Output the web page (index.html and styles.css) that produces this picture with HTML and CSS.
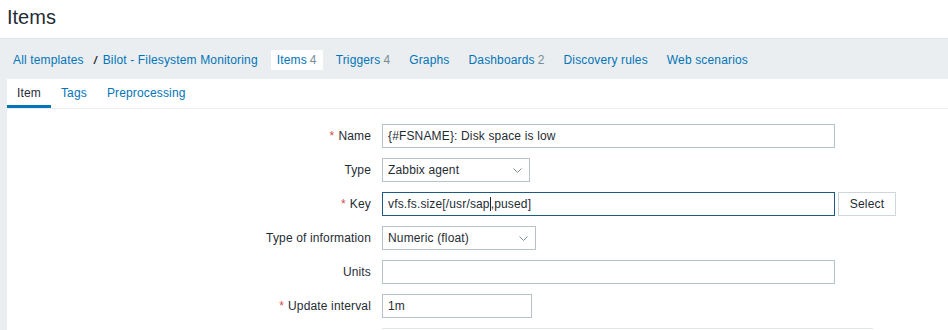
FILE: index.html
```html
<!DOCTYPE html>
<html lang="en">
<head>
<meta charset="utf-8">
<title>Items</title>
<link rel="stylesheet" href="styles.css">
</head>
<body>
<header class="page-header">
  <h1 class="page-title">Items</h1>
</header>
<nav class="subnav">
  <ul class="subnav-list">
    <li class="crumb crumb-first"><a href="#">All templates</a></li>
    <li class="crumb-sep">/</li>
    <li class="crumb"><a href="#">Bilot - Filesystem Monitoring</a></li>
    <li class="crumb crumb-selected"><a href="#">Items</a><span class="count">4</span></li>
    <li class="crumb"><a href="#">Triggers</a><span class="count">4</span></li>
    <li class="crumb"><a href="#">Graphs</a></li>
    <li class="crumb"><a href="#">Dashboards</a><span class="count">2</span></li>
    <li class="crumb"><a href="#">Discovery rules</a></li>
    <li class="crumb"><a href="#">Web scenarios</a></li>
  </ul>
</nav>
<main class="content">
  <ul class="tabs">
    <li class="tab tab-active">Item</li>
    <li class="tab"><a href="#">Tags</a></li>
    <li class="tab"><a href="#">Preprocessing</a></li>
  </ul>
  <form class="form-grid">
    <label class="form-label required">Name</label>
    <div class="field"><div class="input w-wide">{#FSNAME}: Disk space is low</div></div>

    <label class="form-label">Type</label>
    <div class="field">
      <div class="select w-type">Zabbix agent
        <svg class="chev" width="9" height="5" viewBox="0 0 9 5"><path d="M0.5 0.5 L4.5 4.5 L8.5 0.5" fill="none" stroke="#768d99" stroke-width="1"/></svg>
      </div>
    </div>

    <label class="form-label required">Key</label>
    <div class="field field-row">
      <div class="input input-focus w-wide">vfs.fs.size[/usr/sap<span class="caret"></span>,pused]</div>
      <button type="button" class="btn-grey">Select</button>
    </div>

    <label class="form-label">Type of information</label>
    <div class="field">
      <div class="select w-info">Numeric (float)
        <svg class="chev" width="9" height="5" viewBox="0 0 9 5"><path d="M0.5 0.5 L4.5 4.5 L8.5 0.5" fill="none" stroke="#768d99" stroke-width="1"/></svg>
      </div>
    </div>

    <label class="form-label">Units</label>
    <div class="field"><div class="input w-wide"></div></div>

    <label class="form-label required">Update interval</label>
    <div class="field"><div class="input w-small">1m</div></div>

    <label class="form-label"></label>
    <div class="field"><div class="table-box"></div></div>
  </form>
</main>
</body>
</html>
```

FILE: styles.css
```css
html, body {
  margin: 0;
  padding: 0;
}
body {
  background: #ebeef0;
  font-family: Arial, "Liberation Sans", sans-serif;
  font-size: 12px;
  letter-spacing: 0.15px;
  color: #1f2c33;
  height: 330px;
  overflow: hidden;
}
a {
  color: #0275b8;
  text-decoration: none;
}
ul {
  list-style: none;
  margin: 0;
  padding: 0;
}
.page-header {
  background: #fff;
  height: 38px;
  box-sizing: border-box;
  padding: 5px 7px 0;
}
.page-title {
  margin: 0;
  font-size: 20px;
  font-weight: normal;
  letter-spacing: 0;
  line-height: 24px;
  color: #1f2c33;
}
.subnav {
  height: 41px;
  box-sizing: border-box;
  border-top: 1px solid #dfe4e7;
  padding: 11px 0 0 7px;
}
.subnav-list {
  display: flex;
  align-items: center;
}
.crumb {
  height: 20px;
  line-height: 20px;
  padding: 0 6px;
  margin-right: 7px;
  white-space: nowrap;
}
.crumb-first {
  margin-right: 0;
}
.crumb-sep {
  margin: 0 0 0 4px;
  width: 3px;
  font-size: 11px;
  font-style: italic;
  font-weight: bold;
  color: #1f2c33;
}
.crumb-selected {
  background: #fff;
}
.count {
  color: #768d99;
  margin-left: 3px;
}
.content {
  background: #fff;
  margin-left: 7px;
  height: 251px;
}
.tabs {
  display: flex;
  border-bottom: 1px solid #ebeef0;
  box-sizing: border-box;
  height: 30px;
  padding-top: 2px;
}
.tab {
  height: 24px;
  line-height: 24px;
  padding: 0 10px;
  border-bottom: 3px solid transparent;
}
.tab-active {
  border-bottom-color: #0275b8;
  color: #1f2c33;
}
.form-grid {
  display: grid;
  grid-template-columns: 364px 1fr;
  column-gap: 11px;
  row-gap: 10px;
  padding-top: 15px;
  align-items: center;
}
.form-label {
  text-align: right;
  color: #1f2c33;
}
.required::before {
  content: "*";
  color: #d64e4e;
  margin-right: 4px;
}
.field-row {
  display: flex;
  gap: 3px;
}
.input, .select {
  box-sizing: border-box;
  height: 24px;
  line-height: 22px;
  border: 1px solid #b7c3c9;
  padding: 0 5px;
  background: #fff;
  color: #1f2c33;
  white-space: nowrap;
}
.input-focus {
  border-color: #1d5b80;
}
.caret {
  display: inline-block;
  width: 1px;
  height: 14px;
  background: #1f2c33;
  vertical-align: -3px;
}
.select {
  position: relative;
  padding-right: 22px;
}
.chev {
  position: absolute;
  right: 7px;
  top: 9px;
}
.w-wide { width: 453px; }
.w-type { width: 148px; }
.w-info { width: 154px; }
.w-small { width: 150px; }
.btn-grey {
  box-sizing: border-box;
  height: 24px;
  width: 58px;
  border: 1px solid #cfd6da;
  background: #fff;
  color: #1f2c33;
  font-family: Arial, "Liberation Sans", sans-serif;
  font-size: 12px;
  letter-spacing: 0.15px;
  padding: 0;
}
.table-box {
  width: 491px;
  height: 30px;
  border-top: 1px solid #e0e5e8;
}
```
